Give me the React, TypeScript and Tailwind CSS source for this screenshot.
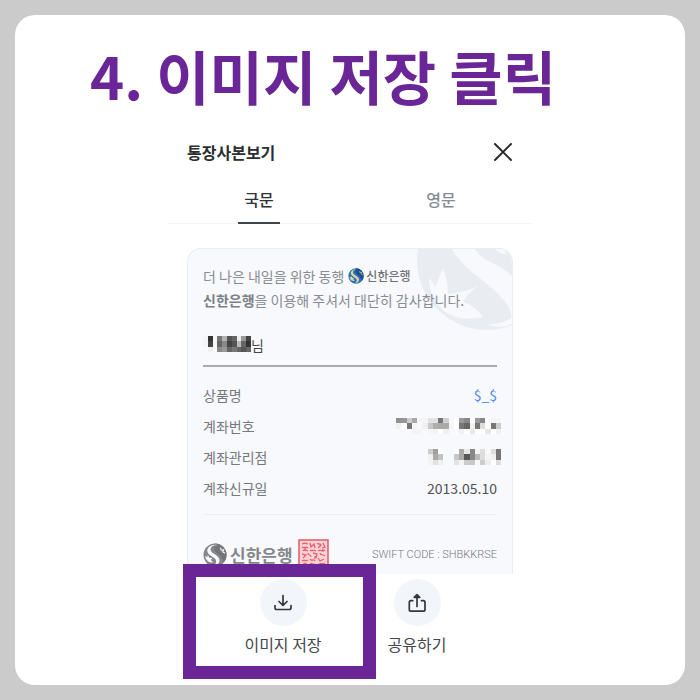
import React from 'react';

const FONT = "font-['Noto_Sans_CJK_KR','Noto_Sans',sans-serif]";

// Masked values: one hex digit pair per cell, '..' leaves the cell empty.
const NAME_CELLS = [
  'f4 33 .. 77 b4 55 66 ee 99 44',
  'f4 44 .. 66 88 44 55 bb 66 33',
  '.. f0 .. 88 99 66 77 66 55 66',
];
const ACCOUNT_CELLS = [
  '90 97 cc a9 f5 f5 e2 e2 77 d0 f8 ff 99 88 ff 99 88 ff f4 f4',
  'f0 ff 77 f4 .. f0 c8 ad a8 aa f6 ff 77 66 f0 77 dd ff 77 cc',
  '.. .. .. f4 f4 .. f6 f2 ff f0 .. .. f0 ff ea ff ff e6 ff f0',
];
const BRANCH_CELLS = [
  '.. .. .. .. .. .. cc a0 ff .. .. ff aa e8 88 f4 dd f8 dd 77',
  '.. .. .. .. .. .. f0 aa c2 .. .. c8 aa 58 88 bb dd f4 f0 77',
  '.. .. .. .. .. .. f4 e2 f0 .. .. e2 f4 cc c8 f8 cc ee ff dd',
];

const Mosaic: React.FC<{ rows: string[]; label: string; className: string }> = ({ rows, label, className }) => {
  const cells = rows.map((row) => row.split(' '));
  return (
    <svg
      role="img"
      aria-label={label}
      className={className}
      viewBox={`0 0 ${cells[0].length} ${cells.length}`}
      preserveAspectRatio="none"
      shapeRendering="crispEdges"
    >
      {cells.map((row, y) =>
        row.map((c, x) => (c === '..' ? null : <rect key={`${x}-${y}`} x={x} y={y} width="1" height="1" fill={`#${c}${c}${c}`} />)),
      )}
    </svg>
  );
};

const BankMark: React.FC<{ base: string; shade: string; swoosh: string; className: string }> = ({ base, shade, swoosh, className }) => (
  <svg viewBox="0 0 24 24" className={className} aria-hidden="true">
    <circle cx="12" cy="12" r="11.5" fill={base} />
    <path d="M12 .5A11.5 11.5 0 0 1 23.5 12c0 3-1 5.500-3 7.500C20 14 16 12 13 9.500 11 7.500 10.500 4 12 .5Z" fill={shade} />
    <path
      d="M14.500 2C9 2 6.800 5 7.800 7.800c1 2.800 7.800 4.400 8.600 8.600.6 3.200-1.600 5.600-5.200 6.400 1.600-2 2.400-4 1.600-6C11.500 13.800 4.800 12.500 4.300 8.200 4 4.400 8.500 1 14.500 2Z"
      fill={swoosh}
    />
    <path d="m2 13 2.300 1.300.4-2.300 2 3 2.600-.2-1.400 2.100 2.300 2.700-3.200-.3C4.500 18.700 2.600 16 2 13Z" fill={swoosh} />
    <path d="m17.500 4.600.6 2.600 2.600-.4-1 2 2.200 1.400" fill="none" stroke={swoosh} strokeWidth="1.100" />
  </svg>
);

const Watermark: React.FC = () => (
  <svg viewBox="0 0 97 82" className="absolute top-0 right-0 h-[82px] w-[97px]" aria-hidden="true">
    <circle cx="72" cy="11" r="70" fill="#e9edf2" />
    <path d="M37 0h23c3 6 8 9 15 13 9 4 16 8 22 14v43c-1-9-5-16-11-22C74 33 49 22 37 0Z" fill="#f8f9fd" />
    <path d="M97 68c-6 5-15 8-26 7 11 4 20 3 26 0Z" fill="#f8f9fd" />
    <path d="M14 29c3 3 5 6 6 10l8-20c3 9 5 17 5 26 10-1 20-3 30-8-7 5-12 10-15 16 8 2 15 8 20 15-18 4-32 1-42-9-7-7-12-19-12-30Z" fill="#f8f9fd" />
    <path d="M80 0c3 3 7 5 12 5l-3-5Z" fill="#f8f9fd" />
  </svg>
);

const Seal: React.FC = () => (
  <svg viewBox="0 0 31 31" className="h-[31px] w-[31px]" aria-hidden="true">
    <rect x="1" y="1" width="29" height="29" fill="#f9d3d8" stroke="#e5626c" strokeWidth="1.600" />
    <path
      d="M4 5c2-1 4-1 6 0M4 8c2 2 4-1 6 1M5 12c1-2 3-1 5 0M12 4l1 4 3-3 1 4M19 4c1 2 3 0 4 2l-3 3M25 4l2 4-3 1M12 11c2 2 4-1 6 1M20 12c2-2 4 1 7-1M4 15l4 1-3 3M10 14c0 3 3 1 3 4M15 14l4 1-1 4M22 14c0 3 3 1 5 3M4 22c2-2 4 1 6-1M12 20c1 3 4-1 5 2M20 19l2 3 4-2M4 26l3-2 3 2M12 25c2-2 4 2 6 0M20 26c1-3 4 0 7-2M7 9v3M17 17v3M25 10v3"
      fill="none"
      stroke="#e5626c"
      strokeWidth="1.300"
    />
  </svg>
);

const DownloadIcon: React.FC = () => (
  <svg viewBox="0 0 24 24" className="h-6 w-6" fill="none" stroke="#33373c" strokeWidth="1.700" strokeLinecap="round" strokeLinejoin="round" aria-hidden="true">
    <path d="M12 4.500v9.500M8 10.500l4 4 4-4M4 14.500v2.300c0 1 .7 1.700 1.700 1.700h12.600c1 0 1.700-.7 1.700-1.700v-2.300" />
  </svg>
);

const ShareIcon: React.FC = () => (
  <svg viewBox="0 0 24 24" className="h-6 w-6" fill="none" stroke="#33373c" strokeWidth="1.700" strokeLinecap="round" strokeLinejoin="round" aria-hidden="true">
    <path d="M12 4v11.500M9.300 6.300 12 3.600l2.700 2.700ZM7.800 9.700H6c-1 0-1.700.7-1.700 1.700v7c0 1 .7 1.700 1.700 1.700h12.300c1 0 1.700-.7 1.700-1.700v-7c0-1-.7-1.700-1.700-1.700h-1.800" />
  </svg>
);

const Row: React.FC<{ label: string; children: React.ReactNode }> = ({ label, children }) => (
  <div className="flex h-[31px] items-center justify-between">
    <dt className="text-[#75787e]">{label}</dt>
    <dd>{children}</dd>
  </div>
);

const Action: React.FC<{ label: string; icon: React.ReactNode; highlighted?: boolean }> = ({ label, icon, highlighted }) => (
  <button type="button" className="relative flex w-[134px] flex-col items-center pt-[5px] pb-3">
    <span className="flex h-[47px] w-[47px] items-center justify-center rounded-full bg-[#f2f6fb]">{icon}</span>
    <span className="mt-[6px] text-base leading-6 text-[#45484d]">{label}</span>
    {highlighted && (
      <span className="absolute -top-[10px] -right-[26px] -bottom-[11px] -left-[33px] z-10 border-[13px] border-[#6a2597]" />
    )}
  </button>
);

export default function App() {
  return (
    <div className={`min-h-screen bg-[#cbcbcb] p-[15px] ${FONT}`}>
      <main className="min-h-[calc(100vh-30px)] rounded-[20px] bg-white pt-7">
        <h1 className="pl-[75px] text-[58px] leading-[64px] font-bold whitespace-nowrap text-[#6a2597]">4. 이미지 저장 클릭</h1>

        <section className="mx-auto mt-[29px] w-full max-w-[364px]">
          <header className="flex h-8 items-center justify-between px-[19px]">
            <h2 className="text-base font-bold text-[#2b2d30]">통장사본보기</h2>
            <button type="button" aria-label="닫기">
              <svg viewBox="0 0 20 20" className="h-5 w-5" fill="none" stroke="#222426" strokeWidth="1.900" strokeLinecap="round" aria-hidden="true">
                <path d="m2 2 16 16M18 2 2 18" />
              </svg>
            </button>
          </header>

          <nav className="mt-2 flex h-12 border-b border-[#f3f4f8]" role="tablist">
            <button type="button" role="tab" aria-selected="true" className="flex flex-1 justify-center">
              <span className="flex h-12 items-center border-b-2 border-[#3f454b] px-[6px] font-medium text-[#303236]">국문</span>
            </button>
            <button type="button" role="tab" aria-selected="false" className="flex flex-1 justify-center">
              <span className="flex h-12 items-center border-b-2 border-transparent px-[6px] font-medium text-[#858b96]">영문</span>
            </button>
          </nav>

          <div className="px-[19px] pt-6">
            <article className="relative overflow-hidden rounded-t-[14px] border border-b-0 border-[#eaecf1] bg-[#f8f9fd] px-[15px] pt-[15px] pb-1 text-sm">
              <Watermark />
              <div className="relative">
                <p className="flex h-6 items-center text-[#898c92]">
                  더 나은 내일을 위한 동행
                  <BankMark base="#2d74b8" shade="#1b4f90" swoosh="#e4d3a0" className="mr-[2px] ml-1 h-4 w-4" />
                  <span className="text-xs font-medium text-[#707278]">신한은행</span>
                </p>
                <p className="leading-6 whitespace-nowrap text-[#898c92]">
                  <b className="font-bold text-[#7c7f85]">신한은행</b>을 이용해 주셔서 대단히 감사합니다.
                </p>

                <p className="mt-[21px] flex h-[34px] items-start border-b-2 border-[#a9abaf] leading-6 text-[#45474b]">
                  <Mosaic rows={NAME_CELLS} label="이름 가림" className="mt-[3px] h-4 w-12" />님
                </p>

                <dl className="mt-3">
                  <Row label="상품명">
                    <span className="text-[#4a8af0]">$_$</span>
                  </Row>
                  <Row label="계좌번호">
                    <Mosaic rows={ACCOUNT_CELLS} label="계좌번호 가림" className="-mr-1 h-4 w-[105px]" />
                  </Row>
                  <Row label="계좌관리점">
                    <Mosaic rows={BRANCH_CELLS} label="계좌관리점 가림" className="-mr-1 h-4 w-[105px]" />
                  </Row>
                  <Row label="계좌신규일">
                    <span className="text-[#505257]">2013.05.10</span>
                  </Row>
                </dl>

                <footer className="mt-[11px] flex items-center justify-between border-t border-[#eceef2] pt-6">
                  <div className="flex items-center">
                    <BankMark base="#85878a" shade="#737578" swoosh="#f8f9fd" className="h-6 w-6" />
                    <span className="mr-[5px] ml-[3px] text-[17px] leading-6 font-bold text-[#85878a]">신한은행</span>
                    <Seal />
                  </div>
                  <span className="font-[Roboto,sans-serif] text-[11px] font-light text-[#75787e]">SWIFT CODE : SHBKKRSE</span>
                </footer>
              </div>
            </article>
          </div>

          <div className="flex justify-center">
            <Action label="이미지 저장" icon={<DownloadIcon />} highlighted />
            <Action label="공유하기" icon={<ShareIcon />} />
          </div>
        </section>
      </main>
    </div>
  );
}
